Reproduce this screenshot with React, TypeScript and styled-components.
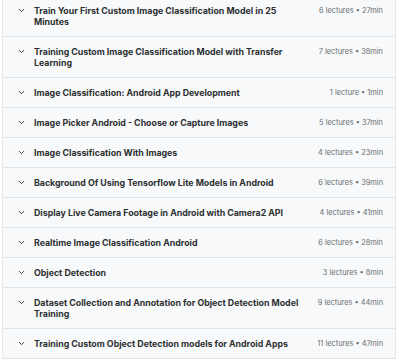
import React from "react";
import styled, { createGlobalStyle } from "styled-components";

const sections = [
  { title: "Train Your First Custom Image Classification Model in 25 Minutes", lectures: 6, length: "27min" },
  { title: "Training Custom Image Classification Model with Transfer Learning", lectures: 7, length: "38min" },
  { title: "Image Classification: Android App Development", lectures: 1, length: "1min" },
  { title: "Image Picker Android - Choose or Capture Images", lectures: 5, length: "37min" },
  { title: "Image Classification With Images", lectures: 4, length: "23min" },
  { title: "Background Of Using Tensorflow Lite Models in Android", lectures: 6, length: "39min" },
  { title: "Display Live Camera Footage in Android with Camera2 API", lectures: 4, length: "41min" },
  { title: "Realtime Image Classification Android", lectures: 6, length: "28min" },
  { title: "Object Detection", lectures: 3, length: "8min" },
  { title: "Dataset Collection and Annotation for Object Detection Model Training", lectures: 9, length: "44min" },
  { title: "Training Custom Object Detection models for Android Apps", lectures: 11, length: "47min" },
];

const GlobalStyle = createGlobalStyle`
  body {
    margin: 0;
    background: #ffffff;
    font-family: Inter, "Liberation Sans", sans-serif;
  }
`;

// list is scrolled a few pixels, so the first section's top is clipped
const Curriculum = styled.div`
  margin: -4px 4px 0 2px;
  border-left: 1px solid #e4e8eb;
  border-right: 1px solid #e4e8eb;
`;

const Section = styled.div`
  display: flex;
  align-items: flex-start;
  padding: 9px 12px 9px 14px;
  background: #f7f9fa;
  border-bottom: 1px solid #dfe3e6;
`;

const Chevron = styled.svg`
  flex: none;
  width: 9px;
  height: 9px;
  margin: 1px 8px 0 0;
  color: #2d2f31;
`;

const Title = styled.span`
  flex: 1;
  font-size: 8.8px;
  line-height: 11px;
  font-weight: 700;
  color: #2d2f31;
`;

const Meta = styled.span`
  flex: none;
  margin-left: 8px;
  font-size: 7.4px;
  line-height: 11px;
  color: #6a6f73;
`;

export default function App() {
  return (
    <>
      <GlobalStyle />
      <Curriculum>
        {sections.map((s) => (
          <Section key={s.title}>
            <Chevron viewBox="0 0 24 24" fill="none" stroke="currentColor" strokeWidth={2.5} strokeLinecap="round" strokeLinejoin="round">
              <path d="m6 9 6 6 6-6" />
            </Chevron>
            <Title>{s.title}</Title>
            <Meta>
              {s.lectures} {s.lectures === 1 ? "lecture" : "lectures"} • {s.length}
            </Meta>
          </Section>
        ))}
      </Curriculum>
    </>
  );
}
